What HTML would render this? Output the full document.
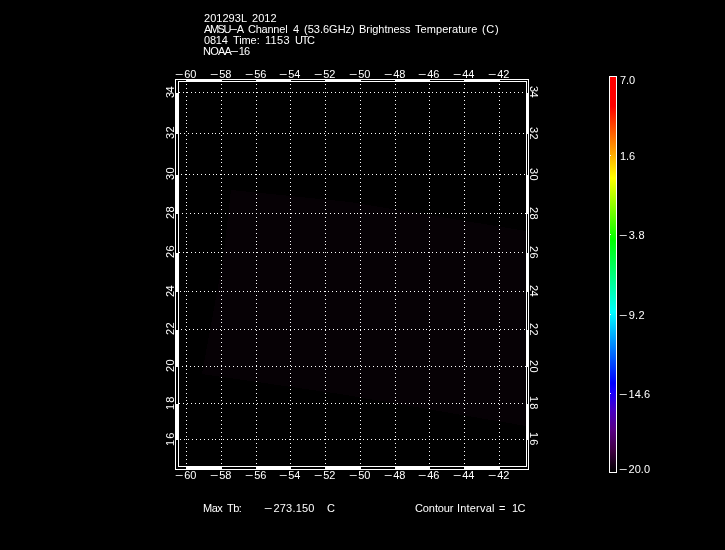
<!DOCTYPE html>
<html><head><meta charset="utf-8"><title>AMSU-A Channel 4 Brightness Temperature</title>
<style>
html,body{margin:0;padding:0;background:#000;}
body{width:725px;height:550px;position:relative;overflow:hidden;font-family:"Liberation Sans",sans-serif;}
svg{position:absolute;left:0;top:0;}
.t{position:absolute;will-change:transform;color:#fff;font-size:11px;line-height:12px;white-space:pre;font-family:"Liberation Sans",sans-serif;}
.m{display:inline-block;transform:scaleX(1.3);margin:0 1.6px 0 0.3px;}
.rl{transform-origin:0 0;transform:rotate(-90deg);}
.rr{transform-origin:0 0;transform:rotate(90deg);}
</style></head><body>
<svg width="725" height="550" viewBox="0 0 725 550" shape-rendering="crispEdges">
<polygon points="231,190 350,202 526,231 526,426 340,394 202,374 210,330 223,260" fill="#060105"/>
<rect x="175" y="79" width="354" height="1" fill="#fff"/>
<rect x="175" y="469" width="354" height="1" fill="#fff"/>
<rect x="175" y="79" width="1" height="391" fill="#fff"/>
<rect x="528" y="79" width="1" height="391" fill="#fff"/>
<rect x="178" y="81" width="349" height="1" fill="#fff"/>
<rect x="178" y="466" width="349" height="1" fill="#fff"/>
<rect x="178" y="81" width="1" height="386" fill="#fff"/>
<rect x="526" y="81" width="1" height="386" fill="#fff"/>
<rect x="186" y="79" width="36" height="3" fill="#fff"/>
<rect x="186" y="466" width="36" height="4" fill="#fff"/>
<rect x="256" y="79" width="35" height="3" fill="#fff"/>
<rect x="256" y="466" width="35" height="4" fill="#fff"/>
<rect x="325" y="79" width="36" height="3" fill="#fff"/>
<rect x="325" y="466" width="36" height="4" fill="#fff"/>
<rect x="395" y="79" width="35" height="3" fill="#fff"/>
<rect x="395" y="466" width="35" height="4" fill="#fff"/>
<rect x="464" y="79" width="36" height="3" fill="#fff"/>
<rect x="464" y="466" width="36" height="4" fill="#fff"/>
<rect x="175" y="93" width="4" height="41" fill="#fff"/>
<rect x="526" y="93" width="3" height="41" fill="#fff"/>
<rect x="175" y="175" width="4" height="39" fill="#fff"/>
<rect x="526" y="175" width="3" height="39" fill="#fff"/>
<rect x="175" y="253" width="4" height="39" fill="#fff"/>
<rect x="526" y="253" width="3" height="39" fill="#fff"/>
<rect x="175" y="330" width="4" height="37" fill="#fff"/>
<rect x="526" y="330" width="3" height="37" fill="#fff"/>
<rect x="175" y="404" width="4" height="36" fill="#fff"/>
<rect x="526" y="404" width="3" height="36" fill="#fff"/>
<path fill="#fff" d="M179 92h1v1h-1zM183 92h1v1h-1zM187 92h1v1h-1zM191 92h1v1h-1zM195 92h1v1h-1zM199 92h1v1h-1zM203 92h1v1h-1zM207 92h1v1h-1zM211 92h1v1h-1zM214 92h1v1h-1zM218 92h1v1h-1zM222 92h1v1h-1zM226 92h1v1h-1zM230 92h1v1h-1zM234 92h1v1h-1zM238 92h1v1h-1zM242 92h1v1h-1zM246 92h1v1h-1zM249 92h1v1h-1zM253 92h1v1h-1zM257 92h1v1h-1zM261 92h1v1h-1zM265 92h1v1h-1zM269 92h1v1h-1zM273 92h1v1h-1zM277 92h1v1h-1zM281 92h1v1h-1zM284 92h1v1h-1zM288 92h1v1h-1zM292 92h1v1h-1zM296 92h1v1h-1zM300 92h1v1h-1zM304 92h1v1h-1zM308 92h1v1h-1zM312 92h1v1h-1zM316 92h1v1h-1zM319 92h1v1h-1zM323 92h1v1h-1zM327 92h1v1h-1zM331 92h1v1h-1zM335 92h1v1h-1zM339 92h1v1h-1zM343 92h1v1h-1zM347 92h1v1h-1zM351 92h1v1h-1zM354 92h1v1h-1zM358 92h1v1h-1zM362 92h1v1h-1zM366 92h1v1h-1zM370 92h1v1h-1zM374 92h1v1h-1zM378 92h1v1h-1zM382 92h1v1h-1zM386 92h1v1h-1zM389 92h1v1h-1zM393 92h1v1h-1zM397 92h1v1h-1zM401 92h1v1h-1zM405 92h1v1h-1zM409 92h1v1h-1zM413 92h1v1h-1zM417 92h1v1h-1zM421 92h1v1h-1zM424 92h1v1h-1zM428 92h1v1h-1zM432 92h1v1h-1zM436 92h1v1h-1zM440 92h1v1h-1zM444 92h1v1h-1zM448 92h1v1h-1zM452 92h1v1h-1zM456 92h1v1h-1zM459 92h1v1h-1zM463 92h1v1h-1zM467 92h1v1h-1zM471 92h1v1h-1zM475 92h1v1h-1zM479 92h1v1h-1zM483 92h1v1h-1zM487 92h1v1h-1zM491 92h1v1h-1zM494 92h1v1h-1zM498 92h1v1h-1zM502 92h1v1h-1zM506 92h1v1h-1zM510 92h1v1h-1zM514 92h1v1h-1zM518 92h1v1h-1zM522 92h1v1h-1zM180 133h1v1h-1zM184 133h1v1h-1zM188 133h1v1h-1zM192 133h1v1h-1zM196 133h1v1h-1zM200 133h1v1h-1zM204 133h1v1h-1zM208 133h1v1h-1zM212 133h1v1h-1zM215 133h1v1h-1zM219 133h1v1h-1zM223 133h1v1h-1zM227 133h1v1h-1zM231 133h1v1h-1zM235 133h1v1h-1zM239 133h1v1h-1zM243 133h1v1h-1zM247 133h1v1h-1zM250 133h1v1h-1zM254 133h1v1h-1zM258 133h1v1h-1zM262 133h1v1h-1zM266 133h1v1h-1zM270 133h1v1h-1zM274 133h1v1h-1zM278 133h1v1h-1zM282 133h1v1h-1zM285 133h1v1h-1zM289 133h1v1h-1zM293 133h1v1h-1zM297 133h1v1h-1zM301 133h1v1h-1zM305 133h1v1h-1zM309 133h1v1h-1zM313 133h1v1h-1zM317 133h1v1h-1zM320 133h1v1h-1zM324 133h1v1h-1zM328 133h1v1h-1zM332 133h1v1h-1zM336 133h1v1h-1zM340 133h1v1h-1zM344 133h1v1h-1zM348 133h1v1h-1zM352 133h1v1h-1zM355 133h1v1h-1zM359 133h1v1h-1zM363 133h1v1h-1zM367 133h1v1h-1zM371 133h1v1h-1zM375 133h1v1h-1zM379 133h1v1h-1zM383 133h1v1h-1zM387 133h1v1h-1zM390 133h1v1h-1zM394 133h1v1h-1zM398 133h1v1h-1zM402 133h1v1h-1zM406 133h1v1h-1zM410 133h1v1h-1zM414 133h1v1h-1zM418 133h1v1h-1zM422 133h1v1h-1zM425 133h1v1h-1zM429 133h1v1h-1zM433 133h1v1h-1zM437 133h1v1h-1zM441 133h1v1h-1zM445 133h1v1h-1zM449 133h1v1h-1zM453 133h1v1h-1zM457 133h1v1h-1zM460 133h1v1h-1zM464 133h1v1h-1zM468 133h1v1h-1zM472 133h1v1h-1zM476 133h1v1h-1zM480 133h1v1h-1zM484 133h1v1h-1zM488 133h1v1h-1zM492 133h1v1h-1zM495 133h1v1h-1zM499 133h1v1h-1zM503 133h1v1h-1zM507 133h1v1h-1zM511 133h1v1h-1zM515 133h1v1h-1zM519 133h1v1h-1zM523 133h1v1h-1zM181 174h1v1h-1zM185 174h1v1h-1zM189 174h1v1h-1zM193 174h1v1h-1zM197 174h1v1h-1zM201 174h1v1h-1zM205 174h1v1h-1zM209 174h1v1h-1zM213 174h1v1h-1zM216 174h1v1h-1zM220 174h1v1h-1zM224 174h1v1h-1zM228 174h1v1h-1zM232 174h1v1h-1zM236 174h1v1h-1zM240 174h1v1h-1zM244 174h1v1h-1zM248 174h1v1h-1zM251 174h1v1h-1zM255 174h1v1h-1zM259 174h1v1h-1zM263 174h1v1h-1zM267 174h1v1h-1zM271 174h1v1h-1zM275 174h1v1h-1zM279 174h1v1h-1zM283 174h1v1h-1zM286 174h1v1h-1zM290 174h1v1h-1zM294 174h1v1h-1zM298 174h1v1h-1zM302 174h1v1h-1zM306 174h1v1h-1zM310 174h1v1h-1zM314 174h1v1h-1zM318 174h1v1h-1zM321 174h1v1h-1zM325 174h1v1h-1zM329 174h1v1h-1zM333 174h1v1h-1zM337 174h1v1h-1zM341 174h1v1h-1zM345 174h1v1h-1zM349 174h1v1h-1zM353 174h1v1h-1zM356 174h1v1h-1zM360 174h1v1h-1zM364 174h1v1h-1zM368 174h1v1h-1zM372 174h1v1h-1zM376 174h1v1h-1zM380 174h1v1h-1zM384 174h1v1h-1zM388 174h1v1h-1zM391 174h1v1h-1zM395 174h1v1h-1zM399 174h1v1h-1zM403 174h1v1h-1zM407 174h1v1h-1zM411 174h1v1h-1zM415 174h1v1h-1zM419 174h1v1h-1zM423 174h1v1h-1zM426 174h1v1h-1zM430 174h1v1h-1zM434 174h1v1h-1zM438 174h1v1h-1zM442 174h1v1h-1zM446 174h1v1h-1zM450 174h1v1h-1zM454 174h1v1h-1zM458 174h1v1h-1zM461 174h1v1h-1zM465 174h1v1h-1zM469 174h1v1h-1zM473 174h1v1h-1zM477 174h1v1h-1zM481 174h1v1h-1zM485 174h1v1h-1zM489 174h1v1h-1zM493 174h1v1h-1zM496 174h1v1h-1zM500 174h1v1h-1zM504 174h1v1h-1zM508 174h1v1h-1zM512 174h1v1h-1zM516 174h1v1h-1zM520 174h1v1h-1zM524 174h1v1h-1zM182 213h1v1h-1zM186 213h1v1h-1zM190 213h1v1h-1zM194 213h1v1h-1zM198 213h1v1h-1zM202 213h1v1h-1zM206 213h1v1h-1zM210 213h1v1h-1zM214 213h1v1h-1zM217 213h1v1h-1zM221 213h1v1h-1zM225 213h1v1h-1zM229 213h1v1h-1zM233 213h1v1h-1zM237 213h1v1h-1zM241 213h1v1h-1zM245 213h1v1h-1zM249 213h1v1h-1zM252 213h1v1h-1zM256 213h1v1h-1zM260 213h1v1h-1zM264 213h1v1h-1zM268 213h1v1h-1zM272 213h1v1h-1zM276 213h1v1h-1zM280 213h1v1h-1zM284 213h1v1h-1zM287 213h1v1h-1zM291 213h1v1h-1zM295 213h1v1h-1zM299 213h1v1h-1zM303 213h1v1h-1zM307 213h1v1h-1zM311 213h1v1h-1zM315 213h1v1h-1zM319 213h1v1h-1zM322 213h1v1h-1zM326 213h1v1h-1zM330 213h1v1h-1zM334 213h1v1h-1zM338 213h1v1h-1zM342 213h1v1h-1zM346 213h1v1h-1zM350 213h1v1h-1zM354 213h1v1h-1zM357 213h1v1h-1zM361 213h1v1h-1zM365 213h1v1h-1zM369 213h1v1h-1zM373 213h1v1h-1zM377 213h1v1h-1zM381 213h1v1h-1zM385 213h1v1h-1zM389 213h1v1h-1zM392 213h1v1h-1zM396 213h1v1h-1zM400 213h1v1h-1zM404 213h1v1h-1zM408 213h1v1h-1zM412 213h1v1h-1zM416 213h1v1h-1zM420 213h1v1h-1zM424 213h1v1h-1zM427 213h1v1h-1zM431 213h1v1h-1zM435 213h1v1h-1zM439 213h1v1h-1zM443 213h1v1h-1zM447 213h1v1h-1zM451 213h1v1h-1zM455 213h1v1h-1zM459 213h1v1h-1zM462 213h1v1h-1zM466 213h1v1h-1zM470 213h1v1h-1zM474 213h1v1h-1zM478 213h1v1h-1zM482 213h1v1h-1zM486 213h1v1h-1zM490 213h1v1h-1zM494 213h1v1h-1zM497 213h1v1h-1zM501 213h1v1h-1zM505 213h1v1h-1zM509 213h1v1h-1zM513 213h1v1h-1zM517 213h1v1h-1zM521 213h1v1h-1zM525 213h1v1h-1zM179 252h1v1h-1zM183 252h1v1h-1zM187 252h1v1h-1zM191 252h1v1h-1zM195 252h1v1h-1zM199 252h1v1h-1zM203 252h1v1h-1zM207 252h1v1h-1zM211 252h1v1h-1zM214 252h1v1h-1zM218 252h1v1h-1zM222 252h1v1h-1zM226 252h1v1h-1zM230 252h1v1h-1zM234 252h1v1h-1zM238 252h1v1h-1zM242 252h1v1h-1zM246 252h1v1h-1zM249 252h1v1h-1zM253 252h1v1h-1zM257 252h1v1h-1zM261 252h1v1h-1zM265 252h1v1h-1zM269 252h1v1h-1zM273 252h1v1h-1zM277 252h1v1h-1zM281 252h1v1h-1zM284 252h1v1h-1zM288 252h1v1h-1zM292 252h1v1h-1zM296 252h1v1h-1zM300 252h1v1h-1zM304 252h1v1h-1zM308 252h1v1h-1zM312 252h1v1h-1zM316 252h1v1h-1zM319 252h1v1h-1zM323 252h1v1h-1zM327 252h1v1h-1zM331 252h1v1h-1zM335 252h1v1h-1zM339 252h1v1h-1zM343 252h1v1h-1zM347 252h1v1h-1zM351 252h1v1h-1zM354 252h1v1h-1zM358 252h1v1h-1zM362 252h1v1h-1zM366 252h1v1h-1zM370 252h1v1h-1zM374 252h1v1h-1zM378 252h1v1h-1zM382 252h1v1h-1zM386 252h1v1h-1zM389 252h1v1h-1zM393 252h1v1h-1zM397 252h1v1h-1zM401 252h1v1h-1zM405 252h1v1h-1zM409 252h1v1h-1zM413 252h1v1h-1zM417 252h1v1h-1zM421 252h1v1h-1zM424 252h1v1h-1zM428 252h1v1h-1zM432 252h1v1h-1zM436 252h1v1h-1zM440 252h1v1h-1zM444 252h1v1h-1zM448 252h1v1h-1zM452 252h1v1h-1zM456 252h1v1h-1zM459 252h1v1h-1zM463 252h1v1h-1zM467 252h1v1h-1zM471 252h1v1h-1zM475 252h1v1h-1zM479 252h1v1h-1zM483 252h1v1h-1zM487 252h1v1h-1zM491 252h1v1h-1zM494 252h1v1h-1zM498 252h1v1h-1zM502 252h1v1h-1zM506 252h1v1h-1zM510 252h1v1h-1zM514 252h1v1h-1zM518 252h1v1h-1zM522 252h1v1h-1zM180 291h1v1h-1zM184 291h1v1h-1zM188 291h1v1h-1zM192 291h1v1h-1zM196 291h1v1h-1zM200 291h1v1h-1zM204 291h1v1h-1zM208 291h1v1h-1zM212 291h1v1h-1zM215 291h1v1h-1zM219 291h1v1h-1zM223 291h1v1h-1zM227 291h1v1h-1zM231 291h1v1h-1zM235 291h1v1h-1zM239 291h1v1h-1zM243 291h1v1h-1zM247 291h1v1h-1zM250 291h1v1h-1zM254 291h1v1h-1zM258 291h1v1h-1zM262 291h1v1h-1zM266 291h1v1h-1zM270 291h1v1h-1zM274 291h1v1h-1zM278 291h1v1h-1zM282 291h1v1h-1zM285 291h1v1h-1zM289 291h1v1h-1zM293 291h1v1h-1zM297 291h1v1h-1zM301 291h1v1h-1zM305 291h1v1h-1zM309 291h1v1h-1zM313 291h1v1h-1zM317 291h1v1h-1zM320 291h1v1h-1zM324 291h1v1h-1zM328 291h1v1h-1zM332 291h1v1h-1zM336 291h1v1h-1zM340 291h1v1h-1zM344 291h1v1h-1zM348 291h1v1h-1zM352 291h1v1h-1zM355 291h1v1h-1zM359 291h1v1h-1zM363 291h1v1h-1zM367 291h1v1h-1zM371 291h1v1h-1zM375 291h1v1h-1zM379 291h1v1h-1zM383 291h1v1h-1zM387 291h1v1h-1zM390 291h1v1h-1zM394 291h1v1h-1zM398 291h1v1h-1zM402 291h1v1h-1zM406 291h1v1h-1zM410 291h1v1h-1zM414 291h1v1h-1zM418 291h1v1h-1zM422 291h1v1h-1zM425 291h1v1h-1zM429 291h1v1h-1zM433 291h1v1h-1zM437 291h1v1h-1zM441 291h1v1h-1zM445 291h1v1h-1zM449 291h1v1h-1zM453 291h1v1h-1zM457 291h1v1h-1zM460 291h1v1h-1zM464 291h1v1h-1zM468 291h1v1h-1zM472 291h1v1h-1zM476 291h1v1h-1zM480 291h1v1h-1zM484 291h1v1h-1zM488 291h1v1h-1zM492 291h1v1h-1zM495 291h1v1h-1zM499 291h1v1h-1zM503 291h1v1h-1zM507 291h1v1h-1zM511 291h1v1h-1zM515 291h1v1h-1zM519 291h1v1h-1zM523 291h1v1h-1zM181 329h1v1h-1zM185 329h1v1h-1zM189 329h1v1h-1zM193 329h1v1h-1zM197 329h1v1h-1zM201 329h1v1h-1zM205 329h1v1h-1zM209 329h1v1h-1zM213 329h1v1h-1zM216 329h1v1h-1zM220 329h1v1h-1zM224 329h1v1h-1zM228 329h1v1h-1zM232 329h1v1h-1zM236 329h1v1h-1zM240 329h1v1h-1zM244 329h1v1h-1zM248 329h1v1h-1zM251 329h1v1h-1zM255 329h1v1h-1zM259 329h1v1h-1zM263 329h1v1h-1zM267 329h1v1h-1zM271 329h1v1h-1zM275 329h1v1h-1zM279 329h1v1h-1zM283 329h1v1h-1zM286 329h1v1h-1zM290 329h1v1h-1zM294 329h1v1h-1zM298 329h1v1h-1zM302 329h1v1h-1zM306 329h1v1h-1zM310 329h1v1h-1zM314 329h1v1h-1zM318 329h1v1h-1zM321 329h1v1h-1zM325 329h1v1h-1zM329 329h1v1h-1zM333 329h1v1h-1zM337 329h1v1h-1zM341 329h1v1h-1zM345 329h1v1h-1zM349 329h1v1h-1zM353 329h1v1h-1zM356 329h1v1h-1zM360 329h1v1h-1zM364 329h1v1h-1zM368 329h1v1h-1zM372 329h1v1h-1zM376 329h1v1h-1zM380 329h1v1h-1zM384 329h1v1h-1zM388 329h1v1h-1zM391 329h1v1h-1zM395 329h1v1h-1zM399 329h1v1h-1zM403 329h1v1h-1zM407 329h1v1h-1zM411 329h1v1h-1zM415 329h1v1h-1zM419 329h1v1h-1zM423 329h1v1h-1zM426 329h1v1h-1zM430 329h1v1h-1zM434 329h1v1h-1zM438 329h1v1h-1zM442 329h1v1h-1zM446 329h1v1h-1zM450 329h1v1h-1zM454 329h1v1h-1zM458 329h1v1h-1zM461 329h1v1h-1zM465 329h1v1h-1zM469 329h1v1h-1zM473 329h1v1h-1zM477 329h1v1h-1zM481 329h1v1h-1zM485 329h1v1h-1zM489 329h1v1h-1zM493 329h1v1h-1zM496 329h1v1h-1zM500 329h1v1h-1zM504 329h1v1h-1zM508 329h1v1h-1zM512 329h1v1h-1zM516 329h1v1h-1zM520 329h1v1h-1zM524 329h1v1h-1zM182 366h1v1h-1zM186 366h1v1h-1zM190 366h1v1h-1zM194 366h1v1h-1zM198 366h1v1h-1zM202 366h1v1h-1zM206 366h1v1h-1zM210 366h1v1h-1zM214 366h1v1h-1zM217 366h1v1h-1zM221 366h1v1h-1zM225 366h1v1h-1zM229 366h1v1h-1zM233 366h1v1h-1zM237 366h1v1h-1zM241 366h1v1h-1zM245 366h1v1h-1zM249 366h1v1h-1zM252 366h1v1h-1zM256 366h1v1h-1zM260 366h1v1h-1zM264 366h1v1h-1zM268 366h1v1h-1zM272 366h1v1h-1zM276 366h1v1h-1zM280 366h1v1h-1zM284 366h1v1h-1zM287 366h1v1h-1zM291 366h1v1h-1zM295 366h1v1h-1zM299 366h1v1h-1zM303 366h1v1h-1zM307 366h1v1h-1zM311 366h1v1h-1zM315 366h1v1h-1zM319 366h1v1h-1zM322 366h1v1h-1zM326 366h1v1h-1zM330 366h1v1h-1zM334 366h1v1h-1zM338 366h1v1h-1zM342 366h1v1h-1zM346 366h1v1h-1zM350 366h1v1h-1zM354 366h1v1h-1zM357 366h1v1h-1zM361 366h1v1h-1zM365 366h1v1h-1zM369 366h1v1h-1zM373 366h1v1h-1zM377 366h1v1h-1zM381 366h1v1h-1zM385 366h1v1h-1zM389 366h1v1h-1zM392 366h1v1h-1zM396 366h1v1h-1zM400 366h1v1h-1zM404 366h1v1h-1zM408 366h1v1h-1zM412 366h1v1h-1zM416 366h1v1h-1zM420 366h1v1h-1zM424 366h1v1h-1zM427 366h1v1h-1zM431 366h1v1h-1zM435 366h1v1h-1zM439 366h1v1h-1zM443 366h1v1h-1zM447 366h1v1h-1zM451 366h1v1h-1zM455 366h1v1h-1zM459 366h1v1h-1zM462 366h1v1h-1zM466 366h1v1h-1zM470 366h1v1h-1zM474 366h1v1h-1zM478 366h1v1h-1zM482 366h1v1h-1zM486 366h1v1h-1zM490 366h1v1h-1zM494 366h1v1h-1zM497 366h1v1h-1zM501 366h1v1h-1zM505 366h1v1h-1zM509 366h1v1h-1zM513 366h1v1h-1zM517 366h1v1h-1zM521 366h1v1h-1zM525 366h1v1h-1zM179 403h1v1h-1zM183 403h1v1h-1zM187 403h1v1h-1zM191 403h1v1h-1zM195 403h1v1h-1zM199 403h1v1h-1zM203 403h1v1h-1zM207 403h1v1h-1zM211 403h1v1h-1zM214 403h1v1h-1zM218 403h1v1h-1zM222 403h1v1h-1zM226 403h1v1h-1zM230 403h1v1h-1zM234 403h1v1h-1zM238 403h1v1h-1zM242 403h1v1h-1zM246 403h1v1h-1zM249 403h1v1h-1zM253 403h1v1h-1zM257 403h1v1h-1zM261 403h1v1h-1zM265 403h1v1h-1zM269 403h1v1h-1zM273 403h1v1h-1zM277 403h1v1h-1zM281 403h1v1h-1zM284 403h1v1h-1zM288 403h1v1h-1zM292 403h1v1h-1zM296 403h1v1h-1zM300 403h1v1h-1zM304 403h1v1h-1zM308 403h1v1h-1zM312 403h1v1h-1zM316 403h1v1h-1zM319 403h1v1h-1zM323 403h1v1h-1zM327 403h1v1h-1zM331 403h1v1h-1zM335 403h1v1h-1zM339 403h1v1h-1zM343 403h1v1h-1zM347 403h1v1h-1zM351 403h1v1h-1zM354 403h1v1h-1zM358 403h1v1h-1zM362 403h1v1h-1zM366 403h1v1h-1zM370 403h1v1h-1zM374 403h1v1h-1zM378 403h1v1h-1zM382 403h1v1h-1zM386 403h1v1h-1zM389 403h1v1h-1zM393 403h1v1h-1zM397 403h1v1h-1zM401 403h1v1h-1zM405 403h1v1h-1zM409 403h1v1h-1zM413 403h1v1h-1zM417 403h1v1h-1zM421 403h1v1h-1zM424 403h1v1h-1zM428 403h1v1h-1zM432 403h1v1h-1zM436 403h1v1h-1zM440 403h1v1h-1zM444 403h1v1h-1zM448 403h1v1h-1zM452 403h1v1h-1zM456 403h1v1h-1zM459 403h1v1h-1zM463 403h1v1h-1zM467 403h1v1h-1zM471 403h1v1h-1zM475 403h1v1h-1zM479 403h1v1h-1zM483 403h1v1h-1zM487 403h1v1h-1zM491 403h1v1h-1zM494 403h1v1h-1zM498 403h1v1h-1zM502 403h1v1h-1zM506 403h1v1h-1zM510 403h1v1h-1zM514 403h1v1h-1zM518 403h1v1h-1zM522 403h1v1h-1zM180 439h1v1h-1zM184 439h1v1h-1zM188 439h1v1h-1zM192 439h1v1h-1zM196 439h1v1h-1zM200 439h1v1h-1zM204 439h1v1h-1zM208 439h1v1h-1zM212 439h1v1h-1zM215 439h1v1h-1zM219 439h1v1h-1zM223 439h1v1h-1zM227 439h1v1h-1zM231 439h1v1h-1zM235 439h1v1h-1zM239 439h1v1h-1zM243 439h1v1h-1zM247 439h1v1h-1zM250 439h1v1h-1zM254 439h1v1h-1zM258 439h1v1h-1zM262 439h1v1h-1zM266 439h1v1h-1zM270 439h1v1h-1zM274 439h1v1h-1zM278 439h1v1h-1zM282 439h1v1h-1zM285 439h1v1h-1zM289 439h1v1h-1zM293 439h1v1h-1zM297 439h1v1h-1zM301 439h1v1h-1zM305 439h1v1h-1zM309 439h1v1h-1zM313 439h1v1h-1zM317 439h1v1h-1zM320 439h1v1h-1zM324 439h1v1h-1zM328 439h1v1h-1zM332 439h1v1h-1zM336 439h1v1h-1zM340 439h1v1h-1zM344 439h1v1h-1zM348 439h1v1h-1zM352 439h1v1h-1zM355 439h1v1h-1zM359 439h1v1h-1zM363 439h1v1h-1zM367 439h1v1h-1zM371 439h1v1h-1zM375 439h1v1h-1zM379 439h1v1h-1zM383 439h1v1h-1zM387 439h1v1h-1zM390 439h1v1h-1zM394 439h1v1h-1zM398 439h1v1h-1zM402 439h1v1h-1zM406 439h1v1h-1zM410 439h1v1h-1zM414 439h1v1h-1zM418 439h1v1h-1zM422 439h1v1h-1zM425 439h1v1h-1zM429 439h1v1h-1zM433 439h1v1h-1zM437 439h1v1h-1zM441 439h1v1h-1zM445 439h1v1h-1zM449 439h1v1h-1zM453 439h1v1h-1zM457 439h1v1h-1zM460 439h1v1h-1zM464 439h1v1h-1zM468 439h1v1h-1zM472 439h1v1h-1zM476 439h1v1h-1zM480 439h1v1h-1zM484 439h1v1h-1zM488 439h1v1h-1zM492 439h1v1h-1zM495 439h1v1h-1zM499 439h1v1h-1zM503 439h1v1h-1zM507 439h1v1h-1zM511 439h1v1h-1zM515 439h1v1h-1zM519 439h1v1h-1zM523 439h1v1h-1zM186 84h1v1h-1zM186 88h1v1h-1zM186 92h1v1h-1zM186 96h1v1h-1zM186 100h1v1h-1zM186 104h1v1h-1zM186 108h1v1h-1zM186 112h1v1h-1zM186 116h1v1h-1zM186 120h1v1h-1zM186 123h1v1h-1zM186 127h1v1h-1zM186 131h1v1h-1zM186 135h1v1h-1zM186 139h1v1h-1zM186 143h1v1h-1zM186 147h1v1h-1zM186 151h1v1h-1zM186 155h1v1h-1zM186 159h1v1h-1zM186 162h1v1h-1zM186 166h1v1h-1zM186 170h1v1h-1zM186 174h1v1h-1zM186 178h1v1h-1zM186 182h1v1h-1zM186 186h1v1h-1zM186 190h1v1h-1zM186 194h1v1h-1zM186 198h1v1h-1zM186 202h1v1h-1zM186 205h1v1h-1zM186 209h1v1h-1zM186 213h1v1h-1zM186 217h1v1h-1zM186 221h1v1h-1zM186 225h1v1h-1zM186 229h1v1h-1zM186 233h1v1h-1zM186 237h1v1h-1zM186 241h1v1h-1zM186 244h1v1h-1zM186 248h1v1h-1zM186 252h1v1h-1zM186 256h1v1h-1zM186 260h1v1h-1zM186 264h1v1h-1zM186 268h1v1h-1zM186 272h1v1h-1zM186 276h1v1h-1zM186 280h1v1h-1zM186 283h1v1h-1zM186 287h1v1h-1zM186 291h1v1h-1zM186 295h1v1h-1zM186 299h1v1h-1zM186 303h1v1h-1zM186 307h1v1h-1zM186 311h1v1h-1zM186 315h1v1h-1zM186 319h1v1h-1zM186 322h1v1h-1zM186 326h1v1h-1zM186 330h1v1h-1zM186 334h1v1h-1zM186 338h1v1h-1zM186 342h1v1h-1zM186 346h1v1h-1zM186 350h1v1h-1zM186 354h1v1h-1zM186 358h1v1h-1zM186 361h1v1h-1zM186 365h1v1h-1zM186 369h1v1h-1zM186 373h1v1h-1zM186 377h1v1h-1zM186 381h1v1h-1zM186 385h1v1h-1zM186 389h1v1h-1zM186 393h1v1h-1zM186 397h1v1h-1zM186 400h1v1h-1zM186 404h1v1h-1zM186 408h1v1h-1zM186 412h1v1h-1zM186 416h1v1h-1zM186 420h1v1h-1zM186 424h1v1h-1zM186 428h1v1h-1zM186 432h1v1h-1zM186 436h1v1h-1zM186 439h1v1h-1zM186 443h1v1h-1zM186 447h1v1h-1zM186 451h1v1h-1zM186 455h1v1h-1zM186 459h1v1h-1zM186 463h1v1h-1zM221 84h1v1h-1zM221 88h1v1h-1zM221 92h1v1h-1zM221 96h1v1h-1zM221 100h1v1h-1zM221 104h1v1h-1zM221 108h1v1h-1zM221 112h1v1h-1zM221 116h1v1h-1zM221 120h1v1h-1zM221 123h1v1h-1zM221 127h1v1h-1zM221 131h1v1h-1zM221 135h1v1h-1zM221 139h1v1h-1zM221 143h1v1h-1zM221 147h1v1h-1zM221 151h1v1h-1zM221 155h1v1h-1zM221 159h1v1h-1zM221 162h1v1h-1zM221 166h1v1h-1zM221 170h1v1h-1zM221 174h1v1h-1zM221 178h1v1h-1zM221 182h1v1h-1zM221 186h1v1h-1zM221 190h1v1h-1zM221 194h1v1h-1zM221 198h1v1h-1zM221 202h1v1h-1zM221 205h1v1h-1zM221 209h1v1h-1zM221 213h1v1h-1zM221 217h1v1h-1zM221 221h1v1h-1zM221 225h1v1h-1zM221 229h1v1h-1zM221 233h1v1h-1zM221 237h1v1h-1zM221 241h1v1h-1zM221 244h1v1h-1zM221 248h1v1h-1zM221 252h1v1h-1zM221 256h1v1h-1zM221 260h1v1h-1zM221 264h1v1h-1zM221 268h1v1h-1zM221 272h1v1h-1zM221 276h1v1h-1zM221 280h1v1h-1zM221 283h1v1h-1zM221 287h1v1h-1zM221 291h1v1h-1zM221 295h1v1h-1zM221 299h1v1h-1zM221 303h1v1h-1zM221 307h1v1h-1zM221 311h1v1h-1zM221 315h1v1h-1zM221 319h1v1h-1zM221 322h1v1h-1zM221 326h1v1h-1zM221 330h1v1h-1zM221 334h1v1h-1zM221 338h1v1h-1zM221 342h1v1h-1zM221 346h1v1h-1zM221 350h1v1h-1zM221 354h1v1h-1zM221 358h1v1h-1zM221 361h1v1h-1zM221 365h1v1h-1zM221 369h1v1h-1zM221 373h1v1h-1zM221 377h1v1h-1zM221 381h1v1h-1zM221 385h1v1h-1zM221 389h1v1h-1zM221 393h1v1h-1zM221 397h1v1h-1zM221 400h1v1h-1zM221 404h1v1h-1zM221 408h1v1h-1zM221 412h1v1h-1zM221 416h1v1h-1zM221 420h1v1h-1zM221 424h1v1h-1zM221 428h1v1h-1zM221 432h1v1h-1zM221 436h1v1h-1zM221 439h1v1h-1zM221 443h1v1h-1zM221 447h1v1h-1zM221 451h1v1h-1zM221 455h1v1h-1zM221 459h1v1h-1zM221 463h1v1h-1zM256 84h1v1h-1zM256 88h1v1h-1zM256 92h1v1h-1zM256 96h1v1h-1zM256 100h1v1h-1zM256 104h1v1h-1zM256 108h1v1h-1zM256 112h1v1h-1zM256 116h1v1h-1zM256 120h1v1h-1zM256 123h1v1h-1zM256 127h1v1h-1zM256 131h1v1h-1zM256 135h1v1h-1zM256 139h1v1h-1zM256 143h1v1h-1zM256 147h1v1h-1zM256 151h1v1h-1zM256 155h1v1h-1zM256 159h1v1h-1zM256 162h1v1h-1zM256 166h1v1h-1zM256 170h1v1h-1zM256 174h1v1h-1zM256 178h1v1h-1zM256 182h1v1h-1zM256 186h1v1h-1zM256 190h1v1h-1zM256 194h1v1h-1zM256 198h1v1h-1zM256 202h1v1h-1zM256 205h1v1h-1zM256 209h1v1h-1zM256 213h1v1h-1zM256 217h1v1h-1zM256 221h1v1h-1zM256 225h1v1h-1zM256 229h1v1h-1zM256 233h1v1h-1zM256 237h1v1h-1zM256 241h1v1h-1zM256 244h1v1h-1zM256 248h1v1h-1zM256 252h1v1h-1zM256 256h1v1h-1zM256 260h1v1h-1zM256 264h1v1h-1zM256 268h1v1h-1zM256 272h1v1h-1zM256 276h1v1h-1zM256 280h1v1h-1zM256 283h1v1h-1zM256 287h1v1h-1zM256 291h1v1h-1zM256 295h1v1h-1zM256 299h1v1h-1zM256 303h1v1h-1zM256 307h1v1h-1zM256 311h1v1h-1zM256 315h1v1h-1zM256 319h1v1h-1zM256 322h1v1h-1zM256 326h1v1h-1zM256 330h1v1h-1zM256 334h1v1h-1zM256 338h1v1h-1zM256 342h1v1h-1zM256 346h1v1h-1zM256 350h1v1h-1zM256 354h1v1h-1zM256 358h1v1h-1zM256 361h1v1h-1zM256 365h1v1h-1zM256 369h1v1h-1zM256 373h1v1h-1zM256 377h1v1h-1zM256 381h1v1h-1zM256 385h1v1h-1zM256 389h1v1h-1zM256 393h1v1h-1zM256 397h1v1h-1zM256 400h1v1h-1zM256 404h1v1h-1zM256 408h1v1h-1zM256 412h1v1h-1zM256 416h1v1h-1zM256 420h1v1h-1zM256 424h1v1h-1zM256 428h1v1h-1zM256 432h1v1h-1zM256 436h1v1h-1zM256 439h1v1h-1zM256 443h1v1h-1zM256 447h1v1h-1zM256 451h1v1h-1zM256 455h1v1h-1zM256 459h1v1h-1zM256 463h1v1h-1zM290 84h1v1h-1zM290 88h1v1h-1zM290 92h1v1h-1zM290 96h1v1h-1zM290 100h1v1h-1zM290 104h1v1h-1zM290 108h1v1h-1zM290 112h1v1h-1zM290 116h1v1h-1zM290 120h1v1h-1zM290 123h1v1h-1zM290 127h1v1h-1zM290 131h1v1h-1zM290 135h1v1h-1zM290 139h1v1h-1zM290 143h1v1h-1zM290 147h1v1h-1zM290 151h1v1h-1zM290 155h1v1h-1zM290 159h1v1h-1zM290 162h1v1h-1zM290 166h1v1h-1zM290 170h1v1h-1zM290 174h1v1h-1zM290 178h1v1h-1zM290 182h1v1h-1zM290 186h1v1h-1zM290 190h1v1h-1zM290 194h1v1h-1zM290 198h1v1h-1zM290 202h1v1h-1zM290 205h1v1h-1zM290 209h1v1h-1zM290 213h1v1h-1zM290 217h1v1h-1zM290 221h1v1h-1zM290 225h1v1h-1zM290 229h1v1h-1zM290 233h1v1h-1zM290 237h1v1h-1zM290 241h1v1h-1zM290 244h1v1h-1zM290 248h1v1h-1zM290 252h1v1h-1zM290 256h1v1h-1zM290 260h1v1h-1zM290 264h1v1h-1zM290 268h1v1h-1zM290 272h1v1h-1zM290 276h1v1h-1zM290 280h1v1h-1zM290 283h1v1h-1zM290 287h1v1h-1zM290 291h1v1h-1zM290 295h1v1h-1zM290 299h1v1h-1zM290 303h1v1h-1zM290 307h1v1h-1zM290 311h1v1h-1zM290 315h1v1h-1zM290 319h1v1h-1zM290 322h1v1h-1zM290 326h1v1h-1zM290 330h1v1h-1zM290 334h1v1h-1zM290 338h1v1h-1zM290 342h1v1h-1zM290 346h1v1h-1zM290 350h1v1h-1zM290 354h1v1h-1zM290 358h1v1h-1zM290 361h1v1h-1zM290 365h1v1h-1zM290 369h1v1h-1zM290 373h1v1h-1zM290 377h1v1h-1zM290 381h1v1h-1zM290 385h1v1h-1zM290 389h1v1h-1zM290 393h1v1h-1zM290 397h1v1h-1zM290 400h1v1h-1zM290 404h1v1h-1zM290 408h1v1h-1zM290 412h1v1h-1zM290 416h1v1h-1zM290 420h1v1h-1zM290 424h1v1h-1zM290 428h1v1h-1zM290 432h1v1h-1zM290 436h1v1h-1zM290 439h1v1h-1zM290 443h1v1h-1zM290 447h1v1h-1zM290 451h1v1h-1zM290 455h1v1h-1zM290 459h1v1h-1zM290 463h1v1h-1zM325 84h1v1h-1zM325 88h1v1h-1zM325 92h1v1h-1zM325 96h1v1h-1zM325 100h1v1h-1zM325 104h1v1h-1zM325 108h1v1h-1zM325 112h1v1h-1zM325 116h1v1h-1zM325 120h1v1h-1zM325 123h1v1h-1zM325 127h1v1h-1zM325 131h1v1h-1zM325 135h1v1h-1zM325 139h1v1h-1zM325 143h1v1h-1zM325 147h1v1h-1zM325 151h1v1h-1zM325 155h1v1h-1zM325 159h1v1h-1zM325 162h1v1h-1zM325 166h1v1h-1zM325 170h1v1h-1zM325 174h1v1h-1zM325 178h1v1h-1zM325 182h1v1h-1zM325 186h1v1h-1zM325 190h1v1h-1zM325 194h1v1h-1zM325 198h1v1h-1zM325 202h1v1h-1zM325 205h1v1h-1zM325 209h1v1h-1zM325 213h1v1h-1zM325 217h1v1h-1zM325 221h1v1h-1zM325 225h1v1h-1zM325 229h1v1h-1zM325 233h1v1h-1zM325 237h1v1h-1zM325 241h1v1h-1zM325 244h1v1h-1zM325 248h1v1h-1zM325 252h1v1h-1zM325 256h1v1h-1zM325 260h1v1h-1zM325 264h1v1h-1zM325 268h1v1h-1zM325 272h1v1h-1zM325 276h1v1h-1zM325 280h1v1h-1zM325 283h1v1h-1zM325 287h1v1h-1zM325 291h1v1h-1zM325 295h1v1h-1zM325 299h1v1h-1zM325 303h1v1h-1zM325 307h1v1h-1zM325 311h1v1h-1zM325 315h1v1h-1zM325 319h1v1h-1zM325 322h1v1h-1zM325 326h1v1h-1zM325 330h1v1h-1zM325 334h1v1h-1zM325 338h1v1h-1zM325 342h1v1h-1zM325 346h1v1h-1zM325 350h1v1h-1zM325 354h1v1h-1zM325 358h1v1h-1zM325 361h1v1h-1zM325 365h1v1h-1zM325 369h1v1h-1zM325 373h1v1h-1zM325 377h1v1h-1zM325 381h1v1h-1zM325 385h1v1h-1zM325 389h1v1h-1zM325 393h1v1h-1zM325 397h1v1h-1zM325 400h1v1h-1zM325 404h1v1h-1zM325 408h1v1h-1zM325 412h1v1h-1zM325 416h1v1h-1zM325 420h1v1h-1zM325 424h1v1h-1zM325 428h1v1h-1zM325 432h1v1h-1zM325 436h1v1h-1zM325 439h1v1h-1zM325 443h1v1h-1zM325 447h1v1h-1zM325 451h1v1h-1zM325 455h1v1h-1zM325 459h1v1h-1zM325 463h1v1h-1zM360 84h1v1h-1zM360 88h1v1h-1zM360 92h1v1h-1zM360 96h1v1h-1zM360 100h1v1h-1zM360 104h1v1h-1zM360 108h1v1h-1zM360 112h1v1h-1zM360 116h1v1h-1zM360 120h1v1h-1zM360 123h1v1h-1zM360 127h1v1h-1zM360 131h1v1h-1zM360 135h1v1h-1zM360 139h1v1h-1zM360 143h1v1h-1zM360 147h1v1h-1zM360 151h1v1h-1zM360 155h1v1h-1zM360 159h1v1h-1zM360 162h1v1h-1zM360 166h1v1h-1zM360 170h1v1h-1zM360 174h1v1h-1zM360 178h1v1h-1zM360 182h1v1h-1zM360 186h1v1h-1zM360 190h1v1h-1zM360 194h1v1h-1zM360 198h1v1h-1zM360 202h1v1h-1zM360 205h1v1h-1zM360 209h1v1h-1zM360 213h1v1h-1zM360 217h1v1h-1zM360 221h1v1h-1zM360 225h1v1h-1zM360 229h1v1h-1zM360 233h1v1h-1zM360 237h1v1h-1zM360 241h1v1h-1zM360 244h1v1h-1zM360 248h1v1h-1zM360 252h1v1h-1zM360 256h1v1h-1zM360 260h1v1h-1zM360 264h1v1h-1zM360 268h1v1h-1zM360 272h1v1h-1zM360 276h1v1h-1zM360 280h1v1h-1zM360 283h1v1h-1zM360 287h1v1h-1zM360 291h1v1h-1zM360 295h1v1h-1zM360 299h1v1h-1zM360 303h1v1h-1zM360 307h1v1h-1zM360 311h1v1h-1zM360 315h1v1h-1zM360 319h1v1h-1zM360 322h1v1h-1zM360 326h1v1h-1zM360 330h1v1h-1zM360 334h1v1h-1zM360 338h1v1h-1zM360 342h1v1h-1zM360 346h1v1h-1zM360 350h1v1h-1zM360 354h1v1h-1zM360 358h1v1h-1zM360 361h1v1h-1zM360 365h1v1h-1zM360 369h1v1h-1zM360 373h1v1h-1zM360 377h1v1h-1zM360 381h1v1h-1zM360 385h1v1h-1zM360 389h1v1h-1zM360 393h1v1h-1zM360 397h1v1h-1zM360 400h1v1h-1zM360 404h1v1h-1zM360 408h1v1h-1zM360 412h1v1h-1zM360 416h1v1h-1zM360 420h1v1h-1zM360 424h1v1h-1zM360 428h1v1h-1zM360 432h1v1h-1zM360 436h1v1h-1zM360 439h1v1h-1zM360 443h1v1h-1zM360 447h1v1h-1zM360 451h1v1h-1zM360 455h1v1h-1zM360 459h1v1h-1zM360 463h1v1h-1zM395 84h1v1h-1zM395 88h1v1h-1zM395 92h1v1h-1zM395 96h1v1h-1zM395 100h1v1h-1zM395 104h1v1h-1zM395 108h1v1h-1zM395 112h1v1h-1zM395 116h1v1h-1zM395 120h1v1h-1zM395 123h1v1h-1zM395 127h1v1h-1zM395 131h1v1h-1zM395 135h1v1h-1zM395 139h1v1h-1zM395 143h1v1h-1zM395 147h1v1h-1zM395 151h1v1h-1zM395 155h1v1h-1zM395 159h1v1h-1zM395 162h1v1h-1zM395 166h1v1h-1zM395 170h1v1h-1zM395 174h1v1h-1zM395 178h1v1h-1zM395 182h1v1h-1zM395 186h1v1h-1zM395 190h1v1h-1zM395 194h1v1h-1zM395 198h1v1h-1zM395 202h1v1h-1zM395 205h1v1h-1zM395 209h1v1h-1zM395 213h1v1h-1zM395 217h1v1h-1zM395 221h1v1h-1zM395 225h1v1h-1zM395 229h1v1h-1zM395 233h1v1h-1zM395 237h1v1h-1zM395 241h1v1h-1zM395 244h1v1h-1zM395 248h1v1h-1zM395 252h1v1h-1zM395 256h1v1h-1zM395 260h1v1h-1zM395 264h1v1h-1zM395 268h1v1h-1zM395 272h1v1h-1zM395 276h1v1h-1zM395 280h1v1h-1zM395 283h1v1h-1zM395 287h1v1h-1zM395 291h1v1h-1zM395 295h1v1h-1zM395 299h1v1h-1zM395 303h1v1h-1zM395 307h1v1h-1zM395 311h1v1h-1zM395 315h1v1h-1zM395 319h1v1h-1zM395 322h1v1h-1zM395 326h1v1h-1zM395 330h1v1h-1zM395 334h1v1h-1zM395 338h1v1h-1zM395 342h1v1h-1zM395 346h1v1h-1zM395 350h1v1h-1zM395 354h1v1h-1zM395 358h1v1h-1zM395 361h1v1h-1zM395 365h1v1h-1zM395 369h1v1h-1zM395 373h1v1h-1zM395 377h1v1h-1zM395 381h1v1h-1zM395 385h1v1h-1zM395 389h1v1h-1zM395 393h1v1h-1zM395 397h1v1h-1zM395 400h1v1h-1zM395 404h1v1h-1zM395 408h1v1h-1zM395 412h1v1h-1zM395 416h1v1h-1zM395 420h1v1h-1zM395 424h1v1h-1zM395 428h1v1h-1zM395 432h1v1h-1zM395 436h1v1h-1zM395 439h1v1h-1zM395 443h1v1h-1zM395 447h1v1h-1zM395 451h1v1h-1zM395 455h1v1h-1zM395 459h1v1h-1zM395 463h1v1h-1zM429 84h1v1h-1zM429 88h1v1h-1zM429 92h1v1h-1zM429 96h1v1h-1zM429 100h1v1h-1zM429 104h1v1h-1zM429 108h1v1h-1zM429 112h1v1h-1zM429 116h1v1h-1zM429 120h1v1h-1zM429 123h1v1h-1zM429 127h1v1h-1zM429 131h1v1h-1zM429 135h1v1h-1zM429 139h1v1h-1zM429 143h1v1h-1zM429 147h1v1h-1zM429 151h1v1h-1zM429 155h1v1h-1zM429 159h1v1h-1zM429 162h1v1h-1zM429 166h1v1h-1zM429 170h1v1h-1zM429 174h1v1h-1zM429 178h1v1h-1zM429 182h1v1h-1zM429 186h1v1h-1zM429 190h1v1h-1zM429 194h1v1h-1zM429 198h1v1h-1zM429 202h1v1h-1zM429 205h1v1h-1zM429 209h1v1h-1zM429 213h1v1h-1zM429 217h1v1h-1zM429 221h1v1h-1zM429 225h1v1h-1zM429 229h1v1h-1zM429 233h1v1h-1zM429 237h1v1h-1zM429 241h1v1h-1zM429 244h1v1h-1zM429 248h1v1h-1zM429 252h1v1h-1zM429 256h1v1h-1zM429 260h1v1h-1zM429 264h1v1h-1zM429 268h1v1h-1zM429 272h1v1h-1zM429 276h1v1h-1zM429 280h1v1h-1zM429 283h1v1h-1zM429 287h1v1h-1zM429 291h1v1h-1zM429 295h1v1h-1zM429 299h1v1h-1zM429 303h1v1h-1zM429 307h1v1h-1zM429 311h1v1h-1zM429 315h1v1h-1zM429 319h1v1h-1zM429 322h1v1h-1zM429 326h1v1h-1zM429 330h1v1h-1zM429 334h1v1h-1zM429 338h1v1h-1zM429 342h1v1h-1zM429 346h1v1h-1zM429 350h1v1h-1zM429 354h1v1h-1zM429 358h1v1h-1zM429 361h1v1h-1zM429 365h1v1h-1zM429 369h1v1h-1zM429 373h1v1h-1zM429 377h1v1h-1zM429 381h1v1h-1zM429 385h1v1h-1zM429 389h1v1h-1zM429 393h1v1h-1zM429 397h1v1h-1zM429 400h1v1h-1zM429 404h1v1h-1zM429 408h1v1h-1zM429 412h1v1h-1zM429 416h1v1h-1zM429 420h1v1h-1zM429 424h1v1h-1zM429 428h1v1h-1zM429 432h1v1h-1zM429 436h1v1h-1zM429 439h1v1h-1zM429 443h1v1h-1zM429 447h1v1h-1zM429 451h1v1h-1zM429 455h1v1h-1zM429 459h1v1h-1zM429 463h1v1h-1zM464 84h1v1h-1zM464 88h1v1h-1zM464 92h1v1h-1zM464 96h1v1h-1zM464 100h1v1h-1zM464 104h1v1h-1zM464 108h1v1h-1zM464 112h1v1h-1zM464 116h1v1h-1zM464 120h1v1h-1zM464 123h1v1h-1zM464 127h1v1h-1zM464 131h1v1h-1zM464 135h1v1h-1zM464 139h1v1h-1zM464 143h1v1h-1zM464 147h1v1h-1zM464 151h1v1h-1zM464 155h1v1h-1zM464 159h1v1h-1zM464 162h1v1h-1zM464 166h1v1h-1zM464 170h1v1h-1zM464 174h1v1h-1zM464 178h1v1h-1zM464 182h1v1h-1zM464 186h1v1h-1zM464 190h1v1h-1zM464 194h1v1h-1zM464 198h1v1h-1zM464 202h1v1h-1zM464 205h1v1h-1zM464 209h1v1h-1zM464 213h1v1h-1zM464 217h1v1h-1zM464 221h1v1h-1zM464 225h1v1h-1zM464 229h1v1h-1zM464 233h1v1h-1zM464 237h1v1h-1zM464 241h1v1h-1zM464 244h1v1h-1zM464 248h1v1h-1zM464 252h1v1h-1zM464 256h1v1h-1zM464 260h1v1h-1zM464 264h1v1h-1zM464 268h1v1h-1zM464 272h1v1h-1zM464 276h1v1h-1zM464 280h1v1h-1zM464 283h1v1h-1zM464 287h1v1h-1zM464 291h1v1h-1zM464 295h1v1h-1zM464 299h1v1h-1zM464 303h1v1h-1zM464 307h1v1h-1zM464 311h1v1h-1zM464 315h1v1h-1zM464 319h1v1h-1zM464 322h1v1h-1zM464 326h1v1h-1zM464 330h1v1h-1zM464 334h1v1h-1zM464 338h1v1h-1zM464 342h1v1h-1zM464 346h1v1h-1zM464 350h1v1h-1zM464 354h1v1h-1zM464 358h1v1h-1zM464 361h1v1h-1zM464 365h1v1h-1zM464 369h1v1h-1zM464 373h1v1h-1zM464 377h1v1h-1zM464 381h1v1h-1zM464 385h1v1h-1zM464 389h1v1h-1zM464 393h1v1h-1zM464 397h1v1h-1zM464 400h1v1h-1zM464 404h1v1h-1zM464 408h1v1h-1zM464 412h1v1h-1zM464 416h1v1h-1zM464 420h1v1h-1zM464 424h1v1h-1zM464 428h1v1h-1zM464 432h1v1h-1zM464 436h1v1h-1zM464 439h1v1h-1zM464 443h1v1h-1zM464 447h1v1h-1zM464 451h1v1h-1zM464 455h1v1h-1zM464 459h1v1h-1zM464 463h1v1h-1zM499 84h1v1h-1zM499 88h1v1h-1zM499 92h1v1h-1zM499 96h1v1h-1zM499 100h1v1h-1zM499 104h1v1h-1zM499 108h1v1h-1zM499 112h1v1h-1zM499 116h1v1h-1zM499 120h1v1h-1zM499 123h1v1h-1zM499 127h1v1h-1zM499 131h1v1h-1zM499 135h1v1h-1zM499 139h1v1h-1zM499 143h1v1h-1zM499 147h1v1h-1zM499 151h1v1h-1zM499 155h1v1h-1zM499 159h1v1h-1zM499 162h1v1h-1zM499 166h1v1h-1zM499 170h1v1h-1zM499 174h1v1h-1zM499 178h1v1h-1zM499 182h1v1h-1zM499 186h1v1h-1zM499 190h1v1h-1zM499 194h1v1h-1zM499 198h1v1h-1zM499 202h1v1h-1zM499 205h1v1h-1zM499 209h1v1h-1zM499 213h1v1h-1zM499 217h1v1h-1zM499 221h1v1h-1zM499 225h1v1h-1zM499 229h1v1h-1zM499 233h1v1h-1zM499 237h1v1h-1zM499 241h1v1h-1zM499 244h1v1h-1zM499 248h1v1h-1zM499 252h1v1h-1zM499 256h1v1h-1zM499 260h1v1h-1zM499 264h1v1h-1zM499 268h1v1h-1zM499 272h1v1h-1zM499 276h1v1h-1zM499 280h1v1h-1zM499 283h1v1h-1zM499 287h1v1h-1zM499 291h1v1h-1zM499 295h1v1h-1zM499 299h1v1h-1zM499 303h1v1h-1zM499 307h1v1h-1zM499 311h1v1h-1zM499 315h1v1h-1zM499 319h1v1h-1zM499 322h1v1h-1zM499 326h1v1h-1zM499 330h1v1h-1zM499 334h1v1h-1zM499 338h1v1h-1zM499 342h1v1h-1zM499 346h1v1h-1zM499 350h1v1h-1zM499 354h1v1h-1zM499 358h1v1h-1zM499 361h1v1h-1zM499 365h1v1h-1zM499 369h1v1h-1zM499 373h1v1h-1zM499 377h1v1h-1zM499 381h1v1h-1zM499 385h1v1h-1zM499 389h1v1h-1zM499 393h1v1h-1zM499 397h1v1h-1zM499 400h1v1h-1zM499 404h1v1h-1zM499 408h1v1h-1zM499 412h1v1h-1zM499 416h1v1h-1zM499 420h1v1h-1zM499 424h1v1h-1zM499 428h1v1h-1zM499 432h1v1h-1zM499 436h1v1h-1zM499 439h1v1h-1zM499 443h1v1h-1zM499 447h1v1h-1zM499 451h1v1h-1zM499 455h1v1h-1zM499 459h1v1h-1zM499 463h1v1h-1z"/>
<defs><linearGradient id="cb" gradientUnits="userSpaceOnUse" x1="0" y1="76" x2="0" y2="472">
<stop offset="0.0000" stop-color="rgb(255, 0, 0)"/><stop offset="0.0758" stop-color="rgb(255, 0, 0)"/><stop offset="0.2576" stop-color="rgb(255, 255, 0)"/><stop offset="0.4141" stop-color="rgb(0, 255, 0)"/><stop offset="0.5960" stop-color="rgb(0, 255, 255)"/><stop offset="0.7753" stop-color="rgb(0, 0, 255)"/><stop offset="0.7980" stop-color="rgb(25, 0, 255)"/><stop offset="0.8434" stop-color="rgb(71, 0, 195)"/><stop offset="0.8939" stop-color="rgb(88, 0, 132)"/><stop offset="0.9470" stop-color="rgb(61, 0, 63)"/><stop offset="1.0000" stop-color="rgb(0, 0, 0)"/></linearGradient></defs>
<rect x="609" y="76" width="8" height="397" fill="#fff"/>
<rect x="610" y="77" width="6" height="395" fill="url(#cb)"/>
<rect x="610" y="155" width="1" height="1" fill="#fff"/>
<rect x="610" y="234" width="1" height="1" fill="#fff"/>
<rect x="610" y="314" width="1" height="1" fill="#fff"/>
<rect x="610" y="393" width="1" height="1" fill="#fff"/>
</svg>
<div class="ln" id="L1"><span class="t" id="t1a" style="left:204px;top:12px;letter-spacing:0.034px;">201293L</span> <span class="t" id="t1b" style="left:252px;top:12px;letter-spacing:0.033px;">2012</span></div><div class="ln" id="L2"><span class="t" id="t2a" style="left:204px;top:23px;letter-spacing:-1.46px;">AMSU<span class="m">−</span>A</span> <span class="t" id="t2b" style="left:248px;top:23px;letter-spacing:-0.233px;">Channel</span> <span class="t" id="t2c" style="left:293px;top:23px;letter-spacing:0.3px;">4</span> <span class="t" id="t2d" style="left:304px;top:23px;">(53.6GHz)</span> <span class="t" id="t2e" style="left:359px;top:23px;letter-spacing:-0.056px;">Brightness</span> <span class="t" id="t2f" style="left:415px;top:23px;letter-spacing:0.06px;">Temperature</span> <span class="t" id="t2g" style="left:482px;top:23px;letter-spacing:0.7px;">(C)</span></div><div class="ln" id="L3"><span class="t" id="t3a" style="left:204px;top:34px;letter-spacing:-0.234px;">0814</span> <span class="t" id="t3b" style="left:233px;top:34px;letter-spacing:-0.1px;">Time:</span> <span class="t" id="t3c" style="left:265px;top:34px;letter-spacing:0.3px;">1153</span> <span class="t" id="t3d" style="left:295px;top:34px;letter-spacing:-1.3px;">UTC</span></div><div class="ln" id="L4"><span class="t" id="t4" style="left:203px;top:45px;letter-spacing:-0.767px;">NOAA<span class="m">−</span>16</span></div><div class="ln" id="TOP"><span class="t" id="lt60" style="left:176px;top:68px;letter-spacing:-0.1px;"><span class="m">−</span>60</span> <span class="t" id="lt58" style="left:211px;top:68px;letter-spacing:-0.1px;"><span class="m">−</span>58</span> <span class="t" id="lt56" style="left:246px;top:68px;letter-spacing:-0.1px;"><span class="m">−</span>56</span> <span class="t" id="lt54" style="left:280px;top:68px;letter-spacing:-0.1px;"><span class="m">−</span>54</span> <span class="t" id="lt52" style="left:315px;top:68px;letter-spacing:-0.1px;"><span class="m">−</span>52</span> <span class="t" id="lt50" style="left:350px;top:68px;letter-spacing:-0.1px;"><span class="m">−</span>50</span> <span class="t" id="lt48" style="left:385px;top:68px;letter-spacing:-0.1px;"><span class="m">−</span>48</span> <span class="t" id="lt46" style="left:419px;top:68px;letter-spacing:-0.1px;"><span class="m">−</span>46</span> <span class="t" id="lt44" style="left:454px;top:68px;letter-spacing:-0.1px;"><span class="m">−</span>44</span> <span class="t" id="lt42" style="left:489px;top:68px;letter-spacing:-0.1px;"><span class="m">−</span>42</span></div><div class="ln" id="BOT"><span class="t" id="lb60" style="left:176px;top:469px;letter-spacing:-0.1px;"><span class="m">−</span>60</span> <span class="t" id="lb58" style="left:211px;top:469px;letter-spacing:-0.1px;"><span class="m">−</span>58</span> <span class="t" id="lb56" style="left:246px;top:469px;letter-spacing:-0.1px;"><span class="m">−</span>56</span> <span class="t" id="lb54" style="left:280px;top:469px;letter-spacing:-0.1px;"><span class="m">−</span>54</span> <span class="t" id="lb52" style="left:315px;top:469px;letter-spacing:-0.1px;"><span class="m">−</span>52</span> <span class="t" id="lb50" style="left:350px;top:469px;letter-spacing:-0.1px;"><span class="m">−</span>50</span> <span class="t" id="lb48" style="left:385px;top:469px;letter-spacing:-0.1px;"><span class="m">−</span>48</span> <span class="t" id="lb46" style="left:419px;top:469px;letter-spacing:-0.1px;"><span class="m">−</span>46</span> <span class="t" id="lb44" style="left:454px;top:469px;letter-spacing:-0.1px;"><span class="m">−</span>44</span> <span class="t" id="lb42" style="left:489px;top:469px;letter-spacing:-0.1px;"><span class="m">−</span>42</span></div><div class="ln" id="LEFT"><span class="t rl" id="ll34" style="left:164px;top:98px;letter-spacing:-0.5px;">34</span> <span class="t rl" id="ll32" style="left:164px;top:139px;letter-spacing:0.3px;">32</span> <span class="t rl" id="ll30" style="left:164px;top:180px;letter-spacing:0.3px;">30</span> <span class="t rl" id="ll28" style="left:164px;top:219px;letter-spacing:0.3px;">28</span> <span class="t rl" id="ll26" style="left:164px;top:258px;letter-spacing:0.3px;">26</span> <span class="t rl" id="ll24" style="left:164px;top:297px;letter-spacing:-0.5px;">24</span> <span class="t rl" id="ll22" style="left:164px;top:335px;letter-spacing:0.3px;">22</span> <span class="t rl" id="ll20" style="left:164px;top:372px;letter-spacing:0.3px;">20</span> <span class="t rl" id="ll18" style="left:164px;top:410px;letter-spacing:1.1px;">18</span> <span class="t rl" id="ll16" style="left:164px;top:446px;letter-spacing:1.1px;">16</span></div><div class="ln" id="RIGHT"><span class="t rr" id="lr34" style="left:540px;top:86px;letter-spacing:-0.5px;">34</span> <span class="t rr" id="lr32" style="left:540px;top:127px;letter-spacing:0.3px;">32</span> <span class="t rr" id="lr30" style="left:540px;top:168px;letter-spacing:0.3px;">30</span> <span class="t rr" id="lr28" style="left:540px;top:207px;letter-spacing:0.3px;">28</span> <span class="t rr" id="lr26" style="left:540px;top:246px;letter-spacing:0.3px;">26</span> <span class="t rr" id="lr24" style="left:540px;top:285px;letter-spacing:-0.5px;">24</span> <span class="t rr" id="lr22" style="left:540px;top:323px;letter-spacing:0.3px;">22</span> <span class="t rr" id="lr20" style="left:540px;top:360px;letter-spacing:0.3px;">20</span> <span class="t rr" id="lr18" style="left:540px;top:396px;letter-spacing:1.1px;">18</span> <span class="t rr" id="lr16" style="left:540px;top:432px;letter-spacing:1.1px;">16</span></div><div class="ln" id="CB"><span class="t" id="c1" style="left:620px;top:74px;letter-spacing:-0.1px;">7.0</span> <span class="t" id="c2" style="left:620px;top:150px;letter-spacing:-0.1px;">1.6</span> <span class="t" id="c3" style="left:620px;top:229px;letter-spacing:0.3px;"><span class="m">−</span>3.8</span> <span class="t" id="c4" style="left:620px;top:309px;letter-spacing:0.3px;"><span class="m">−</span>9.2</span> <span class="t" id="c5" style="left:620px;top:388px;letter-spacing:0.1px;"><span class="m">−</span>14.6</span> <span class="t" id="c6" style="left:620px;top:463px;letter-spacing:0.1px;"><span class="m">−</span>20.0</span></div><div class="ln" id="B1"><span class="t" id="b1a" style="left:203px;top:502px;letter-spacing:-0.5px;">Max</span> <span class="t" id="b1b" style="left:227px;top:502px;letter-spacing:-0.5px;">Tb:</span> <span class="t" id="b2" style="left:265px;top:502px;letter-spacing:0.186px;"><span class="m">−</span>273.150</span> <span class="t" id="b3" style="left:327px;top:502px;letter-spacing:0.3px;">C</span></div><div class="ln" id="B2"><span class="t" id="b4a" style="left:415px;top:502px;letter-spacing:-0.1px;">Contour</span> <span class="t" id="b4b" style="left:457px;top:502px;letter-spacing:0.186px;">Interval</span> <span class="t" id="b4c" style="left:499px;top:502px;letter-spacing:0.3px;">=</span> <span class="t" id="b4d" style="left:512px;top:502px;letter-spacing:-0.5px;">1C</span></div>
</body></html>
